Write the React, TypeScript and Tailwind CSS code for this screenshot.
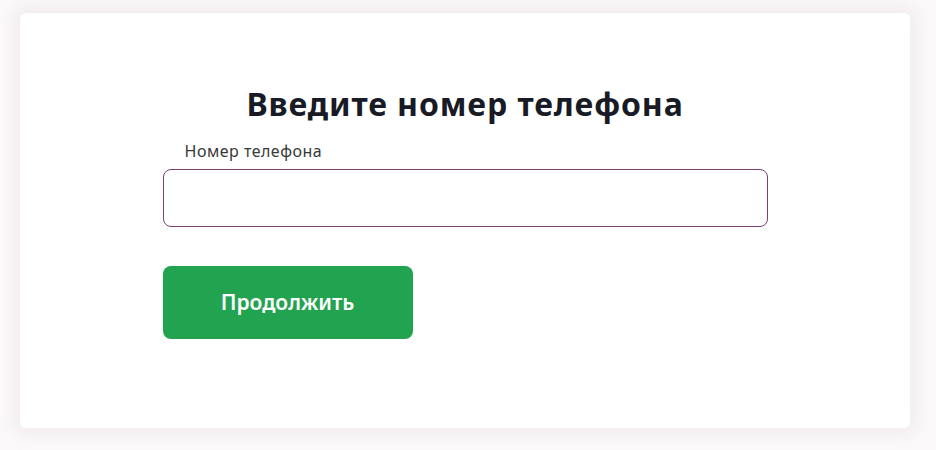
export default function App() {
   return (
      <div className="min-h-[450px] w-full bg-[#fbf9fa] px-5 pt-[13px] pb-[22px] font-['Noto_Sans','Open_Sans',sans-serif]">
         {/* Card */}
         <div className="w-[890px] h-[415px] bg-white rounded-md shadow-[0_0_16px_6px_rgba(236,228,234,0.7)] flex flex-col items-center pt-[71px]">
            <h1 className="text-[32px] leading-[40px] font-bold tracking-[0.9px] text-[#181b26]">Введите номер телефона</h1>

            <form className="w-[605px] flex flex-col mt-[17px]" onSubmit={(e) => e.preventDefault()}>
               <label htmlFor="phone" className="pl-[22px] text-base leading-5 tracking-[0.5px] text-[#383838]">Номер телефона</label>
               <input id="phone" type="tel"
                      className="mt-2 h-[58px] w-full rounded-lg border border-[#7d3f78] bg-white px-4 text-lg outline-none"/>
               <button type="submit"
                       className="mt-[39px] h-[73px] w-[250px] rounded-lg bg-[#22a350] text-white text-[21px] font-semibold">
                  Продолжить
               </button>
            </form>
         </div>
      </div>
   )
}
